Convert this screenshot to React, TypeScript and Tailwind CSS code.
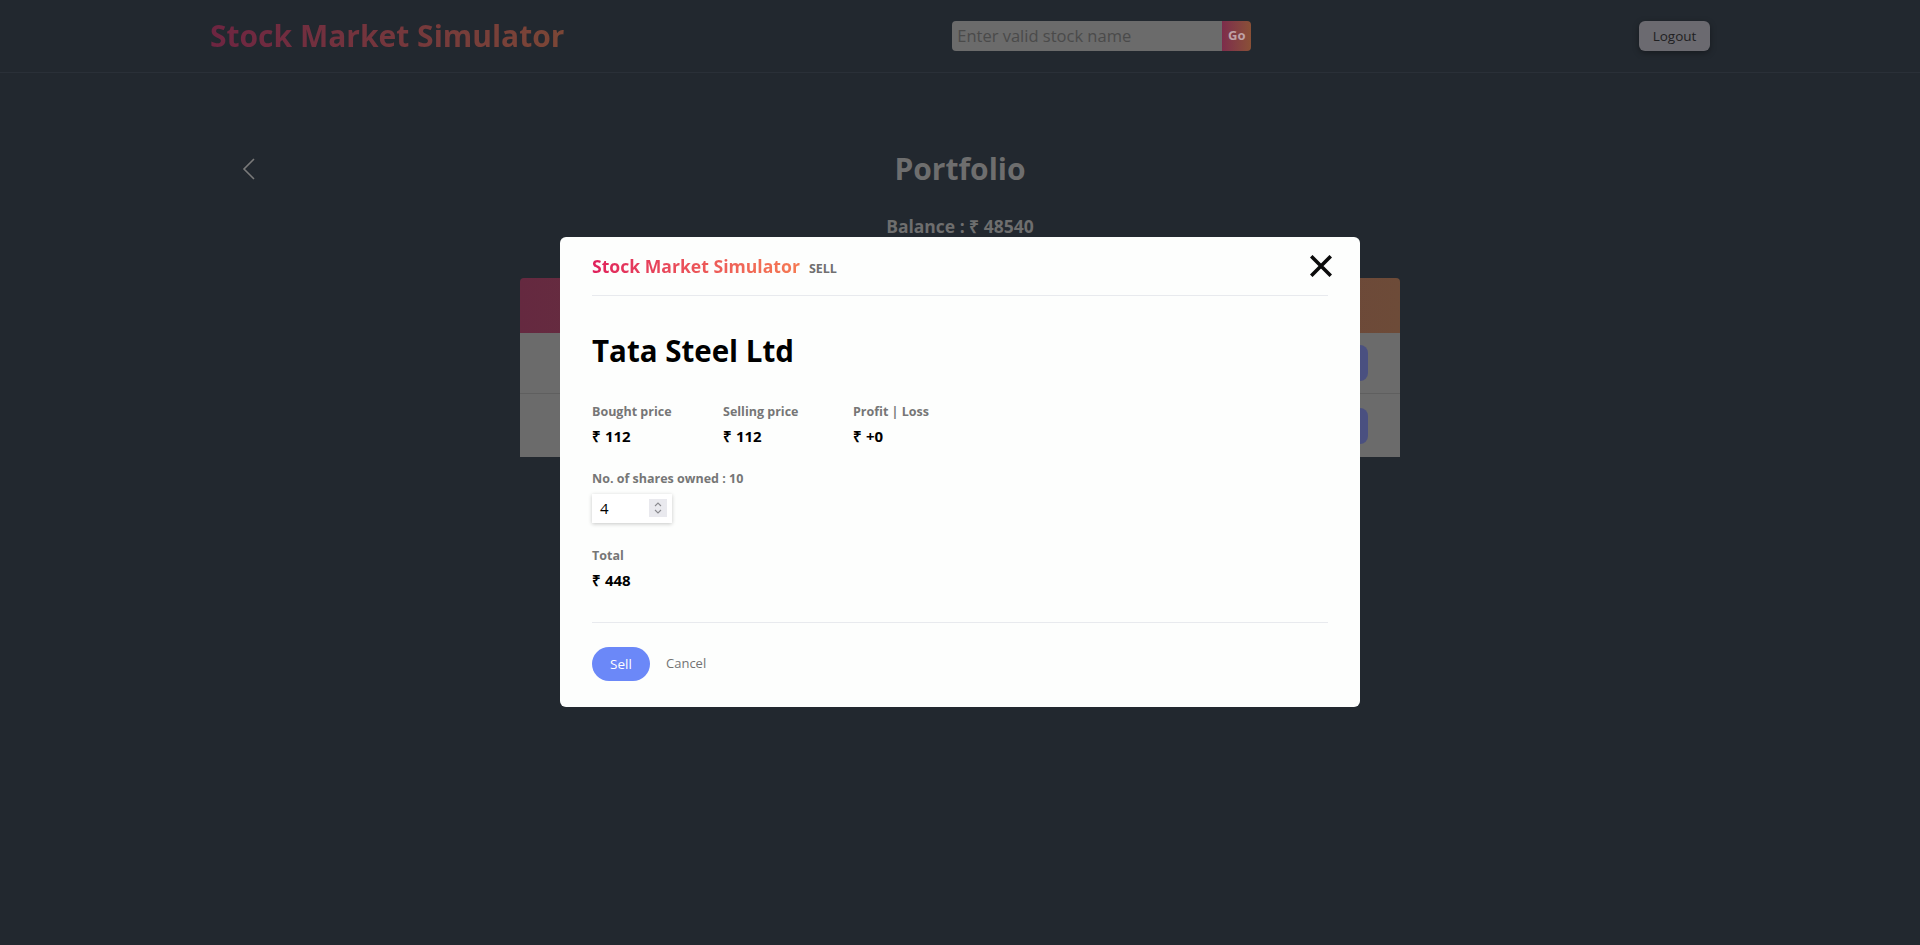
import React from "react";

function CloseIcon() {
  return (
    <svg width="22" height="22" viewBox="0 0 22 22" fill="none">
      <path d="M2.5 2.5 L19.5 19.5 M19.5 2.5 L2.5 19.5" stroke="#0b0b0b" strokeWidth="3.6" strokeLinecap="square" />
    </svg>
  );
}

function Chevron() {
  return (
    <svg width="14" height="22" viewBox="0 0 14 22" fill="none">
      <path d="M12 1 L2 11 L12 21" stroke="#7a7a7a" strokeWidth="1.6" />
    </svg>
  );
}

export default function App() {
  return (
    <div className="relative min-h-[945px] w-full overflow-hidden bg-[#22282f] font-['Open_Sans',sans-serif]">
      {/* Header */}
      <header className="h-[73px] border-b border-[#2a3038]">
        <div className="mx-auto flex h-full max-w-[1500px] items-center justify-between">
          <div className="bg-gradient-to-r from-[#6e2541] to-[#7b4636] bg-clip-text text-[30px] font-bold leading-none text-transparent">
            Stock Market Simulator
          </div>
          <div className="flex h-[30px] w-[299px] items-stretch">
            <div className="flex flex-1 items-center rounded-l-[4px] bg-[#6b6b6b] pl-[5px] text-[16.5px] text-[#4a4a4a]">
              Enter valid stock name
            </div>
            <div className="flex w-[29px] items-center justify-center rounded-r-[4px] bg-gradient-to-r from-[#7d2c4b] to-[#8a5036] text-[13px] font-bold text-[#bfa2a6]">
              Go
            </div>
          </div>
          <div className="flex h-[30px] w-[71px] items-center justify-center rounded-[6px] bg-[#6b6a70] text-[13.5px] text-[#1f1f22] shadow-[0_2px_6px_rgba(0,0,0,0.35)]">
            Logout
          </div>
        </div>
      </header>

      {/* Portfolio */}
      <main className="mx-auto max-w-[1500px]">
        <div className="grid grid-cols-[1fr_auto_1fr] items-center pt-[78px]">
          <div className="pl-[32px]">
            <Chevron />
          </div>
          <h1 className="text-[30px] font-bold leading-[36px] text-[#6e6e6e]">Portfolio</h1>
          <div />
        </div>
        <div className="mt-[28px] text-center text-[17.5px] font-bold leading-[22px] text-[#6e6e6e]">
          Balance : ₹ 48540
        </div>
        <div className="mx-auto mt-[41px] w-[880px] overflow-hidden rounded-t-[4px]">
          <div className="h-[55px] bg-gradient-to-r from-[#652940] to-[#6d4b38]" />
          <div className="flex h-[61px] items-center justify-end border-b border-[#5f5f5f] bg-[#6b6b6b] pr-[32px]">
            <div className="h-[36px] w-[80px] rounded-[8px] bg-[#4a5080]" />
          </div>
          <div className="flex h-[63px] items-center justify-end bg-[#6b6b6b] pr-[32px]">
            <div className="h-[36px] w-[80px] rounded-[8px] bg-[#4a5080]" />
          </div>
        </div>
      </main>

      {/* Modal */}
      <div className="absolute left-[560px] top-[237px] w-[800px] rounded-[6px] bg-[#fdfefd]">
        <div className="mx-8 flex items-center justify-between border-b border-[#e8eaee] pb-[16px] pt-[17px]">
          <div className="flex items-baseline gap-[9px]">
            <span className="bg-gradient-to-r from-[#e01f5c] to-[#f57a53] bg-clip-text text-[17.6px] font-bold leading-[24px] text-transparent">
              Stock Market Simulator
            </span>
            <span className="text-[12.5px] font-bold text-[#6f6f6f]">SELL</span>
          </div>
          <div className="mr-[-4px]">
            <CloseIcon />
          </div>
        </div>

        <div className="px-8">
          <h2 className="mt-[37px] text-[29.5px] font-bold leading-[36px] text-black">Tata Steel Ltd</h2>

          <div className="mt-[34px] grid grid-cols-[131px_130px_auto]">
            <div>
              <div className="text-[12.5px] font-bold leading-[18px] text-[#767676]">Bought price</div>
              <div className="mt-[5px] text-[15px] font-bold leading-[20px] text-black">₹ 112</div>
            </div>
            <div>
              <div className="text-[12.5px] font-bold leading-[18px] text-[#767676]">Selling price</div>
              <div className="mt-[5px] text-[15px] font-bold leading-[20px] text-black">₹ 112</div>
            </div>
            <div>
              <div className="text-[12.5px] font-bold leading-[18px] text-[#767676]">Profit | Loss</div>
              <div className="mt-[5px] text-[15px] font-bold leading-[20px] text-black">₹ +0</div>
            </div>
          </div>

          <div className="mt-[24px] text-[12.5px] font-bold leading-[18px] text-[#767676]">No. of shares owned : 10</div>
          <div className="mt-[6px] flex h-[29px] w-[80px] items-center justify-between bg-white pl-[8px] pr-[5px] shadow-[0_1px_4px_rgba(0,0,0,0.22)]">
            <span className="text-[15px] leading-none text-black">4</span>
            <div className="flex h-[18px] w-[18px] flex-col items-center justify-center bg-[#e9e9ee]">
              <svg width="10" height="14" viewBox="0 0 10 14" fill="none">
                <path d="M2 5 L5 2 L8 5 M2 9 L5 12 L8 9" stroke="#8a8a8f" strokeWidth="1.1" />
              </svg>
            </div>
          </div>

          <div className="mt-[24px] text-[12.5px] font-bold leading-[18px] text-[#767676]">Total</div>
          <div className="mt-[5px] text-[15px] font-bold leading-[20px] text-black">₹ 448</div>

          <div className="mt-[32px] border-t border-[#e8eaee]" />

          <div className="flex items-center gap-[16px] pb-[26px] pt-[24px]">
            <div className="flex h-[34px] w-[58px] items-center justify-center rounded-full bg-[#6b88f8] text-[13.5px] text-white">
              Sell
            </div>
            <div className="text-[13px] text-[#737373]">Cancel</div>
          </div>
        </div>
      </div>
    </div>
  );
}
